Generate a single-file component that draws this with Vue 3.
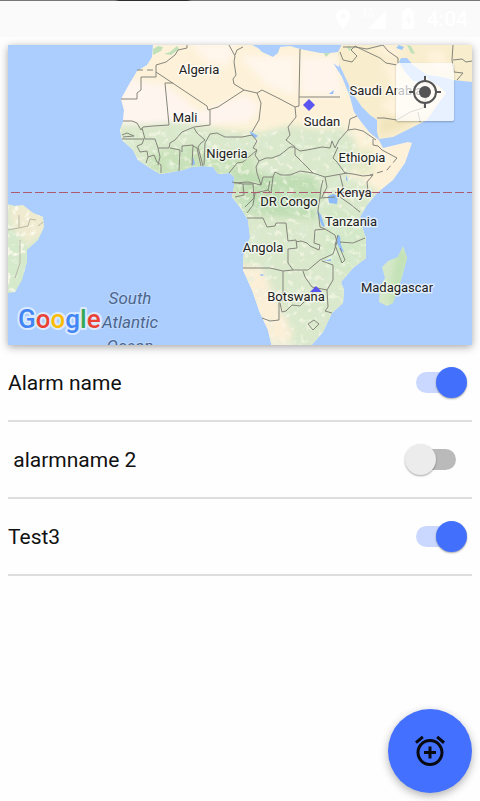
<script setup>
import { ref } from 'vue'

const alarms = ref([
  { id: 'alarm-1', name: 'Alarm name', enabled: true },
  { id: 'alarm-2', name: ' alarmname 2', enabled: false },
  { id: 'alarm-3', name: 'Test3', enabled: true }
])

const places = [
  { name: 'Algeria', x: 199, y: 74 },
  { name: 'Mali', x: 185, y: 122 },
  { name: 'Nigeria', x: 227, y: 158 },
  { name: 'Sudan', x: 322, y: 126 },
  { name: 'Saudi Arabia', x: 386, y: 95 },
  { name: 'Ethiopia', x: 362, y: 162 },
  { name: 'Kenya', x: 354, y: 197 },
  { name: 'DR Congo', x: 289, y: 206 },
  { name: 'Tanzania', x: 351, y: 226 },
  { name: 'Angola', x: 263, y: 252 },
  { name: 'Botswana', x: 296, y: 301 },
  { name: 'Madagascar', x: 397, y: 292 }
]

const africa =
  'M153 44L152 57 147 65 137 71 130 83 121 99 124 110 123 122 120 130 122 140 133 150 138 160 150 168 160 174 167 173 183 170 192 167 203 166 213 167 218 174 230 173 234 177 234 187 232 197 242 210 248 220 250 237 243 257 243 270 252 290 260 313 268 330 272 347H310L323 332 332 313 343 303 344 290 341 282 353 268 366 258 366 238 363 230 360 217 367 205 377 193 393 180 405 163 412 143 408 142 383 148 379 140 370 133 362 123 354 112 350 97 342 77 333 63 339 67 340 62 338 52 330 53 320 53 300 49 290 46 280 47 278 53 273 57 262 52 258 48 250 44Z'
const arabia =
  'M342 44L338 52 340 66 348 83 355 97 362 107 370 115 377 120 377 132 379 139 393 137 413 127 427 120 435 108 446 93 440 87 429 80 426 76 423 83 413 81 405 72 399 62 401 58 407 58 413 65 427 75 442 77 453 80 473 82V44Z'
const madagascar =
  'M403 246L407 258 402 277 393 303 387 306 379 302 380 287 385 278 382 267 388 261 398 257Z'
const brazil =
  'M7 204L15 206 23 205 33 213 43 217 44 227 38 240 27 250 27 262 22 280 15 292 7 293Z'

const borders = [
  'M187 45V48L178 50 175 55 166 62 156 65V72L207 106 208 110 218 107 244 90 234 84 233 79 236 75 234 62 235 56 229 45',
  'M235 55L237 50 243 47',
  'M156 72V77H141V90L137 93V99H121',
  'M173 83H165L169 125 153 126 143 127 141 130 137 123 132 121H123',
  'M122 139H144M122 135L127 133 134 136 123 137',
  'M142 128L145 139 155 139 158 148H169L170 143 175 140 182 132 194 127 210 125V110',
  'M144 139L142 144 137 146 140 152 147 151 148 157 154 155 157 162 161 165V173',
  'M158 148L160 157 158 165M148 157L146 163',
  'M170 148L180 150 179 171M182 152V146L193 145 192 165',
  'M193 146L197 148 201 166M194 128L197 133 205 140 201 143 198 147 203 166',
  'M210 134L205 143 204 165M210 134L217 133 225 137 242 137 252 135 257 141 253 148 257 150',
  'M244 90L257 93 261 103 259 120 252 132',
  'M257 93L262 90 280 99 295 107 296 117 288 127 290 135 286 140 295 147',
  'M257 150L250 156 243 162 237 163 229 173',
  'M257 150L255 155 259 161 256 167 257 173 261 185 248 182 234 183',
  'M259 161L266 158 272 158 280 155 290 147 295 147',
  'M261 185L263 177H273L271 193 268 190M273 177L275 172 281 175 290 175 300 171 313 173',
  'M300 49L299 97H340M299 97V106L295 107',
  'M294 147L300 151 307 150 322 147 330 148 332 141 335 148 339 140 348 130 350 119 357 116',
  'M295 148V155L305 165 313 173 325 177 347 173',
  'M338 147L333 158 337 162 345 173 353 174 363 176 373 175 367 182 368 192',
  'M348 130L355 129 363 131 376 140M373 139V145L378 146 382 150 397 158',
  'M325 177L327 187 322 197M340 175L343 187 340 192',
  'M320 198L335 197M340 197L350 204 360 212',
  'M270 181L268 190 255 193 253 205 247 213',
  'M232 182L243 184 244 195 235 197M243 184H253L254 198 245 207',
  'M247 218H263L267 227 275 226 276 223 286 223 288 241 296 240 297 248 288 249V263L293 270',
  'M296 242L301 241 307 243 310 246 319 250 320 245 314 243 315 230 325 229 335 235 337 242 333 254 320 260 308 270H293L283 271 270 268H243',
  'M340 242L353 243 365 238M338 235L335 245 342 263 345 260 340 248',
  'M303 271L305 277 312 287 327 290 333 280V265L322 261',
  'M283 271V300L279 302V320L270 321 262 318',
  'M280 303L282 312 286 311 292 305 300 306 306 300 315 290',
  'M327 290L328 307 325 311 332 313',
  'M308 324L314 320 319 324 313 330Z',
  'M323 180L321 188 320 197 318 210 320 227 325 229',
  'M340 52L343 60 352 62 357 56 351 50 355 46 363 50 380 58 386 63 397 65',
  'M343 47H355L367 49 383 45 388 51 398 58V64',
  'M377 118L384 118 397 120 410 112 423 108 427 95M418 112L420 122',
  'M453 45L452 60 454 72 463 73 457 80M453 60L462 59 466 62 472 61'
].join('')
</script>

<template>
  <div class="screen">
    <header class="status">
      <svg class="pin" viewBox="0 0 16 24" aria-hidden="true">
        <path fill-rule="evenodd" d="M8 2C4 2 1 5 1 9c0 5 7 13 7 13s7-8 7-13c0-4-3-7-7-7zm0 4.500a2.500 2.500 0 1 1 0 5 2.500 2.500 0 0 1 0-5z" />
      </svg>
      <svg class="signal" viewBox="0 0 28 24" aria-hidden="true">
        <path d="M26 4v18H8z" />
        <path class="outline" d="M2 2h4v3H3h3v4H2M13 2H9v7h4V6h-2" />
      </svg>
      <svg class="battery" viewBox="0 0 16 24" aria-hidden="true">
        <path d="M5 1h6v3h3v18H2V4h3zM9 7l-4 7h3v5l4-7H9z" fill-rule="evenodd" />
      </svg>
      <span class="clock">4:04</span>
    </header>

    <main>
      <section class="map-card" aria-label="Map">
        <svg class="map" viewBox="8 45 464 300" preserveAspectRatio="xMidYMid slice">
          <defs>
            <clipPath id="land">
              <path :d="africa" /><path :d="madagascar" /><path :d="brazil" />
            </clipPath>
            <clipPath id="gulf"><path :d="arabia" /></clipPath>
            <filter id="soft" x="-20%" y="-20%" width="140%" height="140%">
              <feGaussianBlur stdDeviation="3" />
            </filter>
            <filter id="speckle" x="0" y="0" width="100%" height="100%">
              <feTurbulence type="fractalNoise" baseFrequency="0.16" numOctaves="3" seed="8" />
              <feColorMatrix values="0 0 0 0 0.97  0 0 0 0 0.96  0 0 0 0 0.84  5 0 0 0 -2.800" />
            </filter>
            <filter id="leaf" x="0" y="0" width="100%" height="100%">
              <feTurbulence type="fractalNoise" baseFrequency="0.08" numOctaves="3" seed="21" />
              <feColorMatrix values="0 0 0 0 0.72  0 0 0 0 0.86  0 0 0 0 0.70  0 4 0 0 -2" />
            </filter>
          </defs>
          <rect x="0" y="0" width="480" height="400" fill="#abceff" />
          <path :d="africa" fill="#fdf2d9" />
          <path :d="madagascar" fill="#d5e8c8" />
          <path :d="brazil" fill="#d5e9cb" />
          <g clip-path="url(#land)">
            <g filter="url(#soft)">
              <path d="M122 78L165 85 200 112 246 95 260 108 248 122 170 126 118 124Z" fill="#fff5ef" />
              <path d="M190 44H235L228 66 208 62Z" fill="#fff6ec" />
              <path d="M240 56H296V96L268 86Z" fill="#fff6ec" />
              <path d="M300 57H335L343 95H302Z" fill="#fff5ec" />
              <path d="M110 125L155 124 178 121 210 127 235 131 262 132 290 125 325 130 340 127 354 138 361 157 347 177 369 185 380 193 370 265 350 350 300 355 276 320 264 290 240 270 220 190 150 185Z" fill="#dae8cb" />
              <path d="M150 151L205 145 226 160 250 152 256 178 190 176 150 177Z" fill="#c9e2ba" />
              <path d="M232 170L270 174 315 176 321 195 315 219 270 216 240 212Z" fill="#bfdeb4" />
              <path d="M325 205L365 215 368 258 345 277 323 259Z" fill="#d3e8c7" />
              <path d="M241 265L262 268 275 296 293 333 284 354 248 348Z" fill="#fbefd8" />
              <path d="M350 150L372 148 376 172 358 176Z" fill="#e6eac9" />
              <path d="M397 246L410 254 398 307 389 303Z" fill="#c3e2b6" />
              <path d="M8 204H42L47 231 28 246 10 224Z" fill="#f0ebd0" />
            </g>
            <path d="M120 135L205 130 245 145 285 140 328 153 351 180 366 216 368 265 345 300 318 347 291 347 270 285 245 262 226 178 150 178Z" filter="url(#leaf)" opacity=".4" />
            <rect x="120" y="130" width="255" height="217" filter="url(#speckle)" opacity=".6" />
            <rect x="8" y="200" width="40" height="95" filter="url(#speckle)" />
            <path d="M153 49l5-3 5 1-2 4-8 4zM164 54l6-2 7-6 2 3-8 6zM323 52l7 1-4 4z" fill="#bfe0b8" />
          </g>
          <path :d="arabia" fill="#f8edcd" />
          <g clip-path="url(#gulf)">
            <g filter="url(#soft)">
              <path d="M381 60L430 84 448 96 426 115 395 117 379 105 395 95Z" fill="#fff3dd" />
              <path d="M372 47L395 45 405 55 390 58ZM424 51L442 49 449 68 435 72Z" fill="#fff2da" />
              <path d="M379 119L417 115 405 126 381 135Z" fill="#f1e4bc" />
            </g>
            <path d="M407 45l4 1 4 8-4-1zM347 46l5 2-3 3z" fill="#bfe0b8" />
            <path d="M399 45l5 2-2 3-6-2z" fill="#9cc7fb" />
          </g>

          <g class="lakes">
            <path d="M328 196l5-2 5 2-1 8-8-1zM250 131l3 2 5 3-3 2-4-3zM317 210l4 5 4 12-3-1-4-10zM337 235l3 1 1 9 3 7-3-1-4-8zM329 94l5-4-1 4zM346 175l2 6-2-1zM324 261l7-2v2zM193 157l2 7-3 2zM260 274l5 1-4 1z" />
          </g>
          <path class="border" :d="borders" />
          <path class="border disputed" d="M137 70H156M397 158L387 170 370 175" />
          <path class="border faint" d="M19 215V228L28 226 30 219 36 220M20 240L20 263 15 278M8 230L19 228M38 226L43 222" />
          <path class="equator" d="M-1 192.500H480" />

          <g class="marker">
            <path d="M309 99l6 6-6 6-6-6z" />
            <path d="M316 286l6 6h-12z" />
          </g>
          <g class="place">
            <text v-for="p in places" :key="p.name" :x="p.x" :y="p.y">{{ p.name }}</text>
          </g>
          <g class="ocean">
            <text x="130" y="304">South</text>
            <text x="130" y="328">Atlantic</text>
            <text x="130" y="352">Ocean</text>
          </g>
          <text class="logo" x="18" y="328"><tspan fill="#4285f4">G</tspan><tspan fill="#ea4335">o</tspan><tspan fill="#fbbc05">o</tspan><tspan fill="#4285f4">g</tspan><tspan fill="#34a853">l</tspan><tspan fill="#ea4335">e</tspan></text>
        </svg>

        <button class="locate" type="button" aria-label="My location">
          <svg viewBox="0 0 34 34" aria-hidden="true">
            <circle cx="17" cy="17" r="11" fill="none" stroke="#555" stroke-width="2" />
            <circle cx="17" cy="17" r="6" fill="#555" />
            <path d="M17 1v5M17 28v5M1 17h5M28 17h5" stroke="#555" stroke-width="2" />
          </svg>
        </button>
      </section>

      <ul class="alarms">
        <li v-for="alarm in alarms" :key="alarm.id" class="alarm">
          <label class="name" :for="alarm.id">{{ alarm.name }}</label>
          <input :id="alarm.id" v-model="alarm.enabled" class="switch" type="checkbox" role="switch" />
        </li>
      </ul>
    </main>

    <button class="add" type="button" aria-label="Add alarm">
      <svg viewBox="0 0 24 24" aria-hidden="true">
        <path d="M7.880 3.390L6.600 1.860 2 5.710l1.290 1.530 4.590-3.850zM22 5.720l-4.600-3.860-1.290 1.530 4.600 3.860L22 5.720zM12 4c-4.970 0-9 4.030-9 9s4.020 9 9 9c4.970 0 9-4.030 9-9s-4.030-9-9-9zm0 16c-3.870 0-7-3.130-7-7s3.130-7 7-7 7 3.130 7 7-3.130 7-7 7zm1-11h-2v3H8v2h3v3h2v-3h3v-2h-3V9z" />
      </svg>
    </button>
  </div>
</template>

<style>
body {
  margin: 0;
  background: #fefefe;
}
</style>

<style scoped>
.screen {
  min-height: 100vh;
  box-sizing: border-box;
  font-family: Roboto, "Liberation Sans", sans-serif;
  color: #111;
}
.status {
  display: flex;
  align-items: center;
  justify-content: flex-end;
  height: 37px;
  padding: 0 12px;
  box-sizing: border-box;
  border-top: 1px solid #77777a;
  border-image: linear-gradient(90deg, #77777a 24%, #2d2b30 25%, #2d2b30 39%, #77777a 40%) 1;
  background: #fafafa;
  color: #fff;
}
.status svg {
  height: 24px;
  fill: #fff;
}
.pin { width: 16px; }
.signal { width: 28px; margin-left: 9px; }
.battery { width: 16px; margin-left: 12px; }
.outline {
  fill: none;
  stroke: #fff;
  stroke-width: 1;
}
.clock {
  margin-left: 11px;
  font-size: 21px;
  line-height: 24px;
  font-weight: 500;
}
.map-card {
  position: relative;
  margin: 8px 8px 0;
  height: 300px;
  box-shadow: 0 2px 8px rgba(0, 0, 0, 0.35);
}
.map {
  display: block;
  width: 100%;
  height: 100%;
}
.lakes { fill: #8fbcfb; }
.border {
  fill: none;
  stroke: #85857c;
  stroke-width: 1;
  stroke-linejoin: round;
}
.disputed { stroke-dasharray: 6 4; }
.faint { stroke: #b9b9a6; }
.equator {
  stroke: #ab5a70;
  stroke-width: 1;
  stroke-dasharray: 9 3;
}
.marker { fill: #5a55ee; }
.place text {
  font-size: 13px;
  text-anchor: middle;
  fill: #222;
  stroke: rgba(255, 255, 255, 0.6);
  stroke-width: 3;
  stroke-linejoin: round;
  paint-order: stroke;
}
.ocean text {
  font-size: 17px;
  font-style: italic;
  text-anchor: middle;
  fill: #4c668c;
  stroke: rgba(200, 222, 255, 0.6);
  stroke-width: 2;
  paint-order: stroke;
}
.logo {
  font-size: 26px;
  font-weight: 500;
  stroke: #dceaff;
  stroke-width: 4;
  stroke-linejoin: round;
  paint-order: stroke;
}
.locate {
  position: absolute;
  top: 18px;
  right: 18px;
  display: grid;
  place-items: center;
  width: 58px;
  height: 58px;
  padding: 0;
  border: 0;
  border-radius: 2px;
  background: rgba(255, 255, 255, 0.72);
  box-shadow: 0 1px 2px rgba(0, 0, 0, 0.25);
}
.locate svg {
  width: 34px;
  height: 34px;
}
.alarms {
  margin: 0;
  padding: 0 8px;
  list-style: none;
}
.alarm {
  display: flex;
  align-items: center;
  justify-content: space-between;
  height: 75px;
  padding-right: 5px;
  border-bottom: 2px solid #dedede;
}
.name {
  flex: 1;
  font-size: 21px;
  line-height: 28px;
  white-space: pre;
}
.switch {
  appearance: none;
  position: relative;
  width: 62px;
  height: 31px;
  margin: 0;
}
.switch::before {
  content: "";
  position: absolute;
  inset: 5px 11px;
  border-radius: 11px;
  background: #bababa;
}
.switch::after {
  content: "";
  position: absolute;
  top: 0;
  left: 0;
  width: 31px;
  height: 31px;
  border-radius: 50%;
  background: #ececec;
  box-shadow: 0 1px 2px rgba(0, 0, 0, 0.35);
}
.switch:checked::before { background: #cad8ff; }
.switch:checked::after {
  left: auto;
  right: 0;
  background: #4270fc;
}
.add {
  position: fixed;
  right: 8px;
  bottom: 8px;
  display: grid;
  place-items: center;
  width: 84px;
  height: 84px;
  padding: 0;
  border: 0;
  border-radius: 50%;
  background: #4370ff;
  box-shadow: 0 3px 8px rgba(0, 0, 0, 0.3);
}
.add svg {
  width: 36px;
  height: 36px;
  fill: #080a10;
}
</style>
